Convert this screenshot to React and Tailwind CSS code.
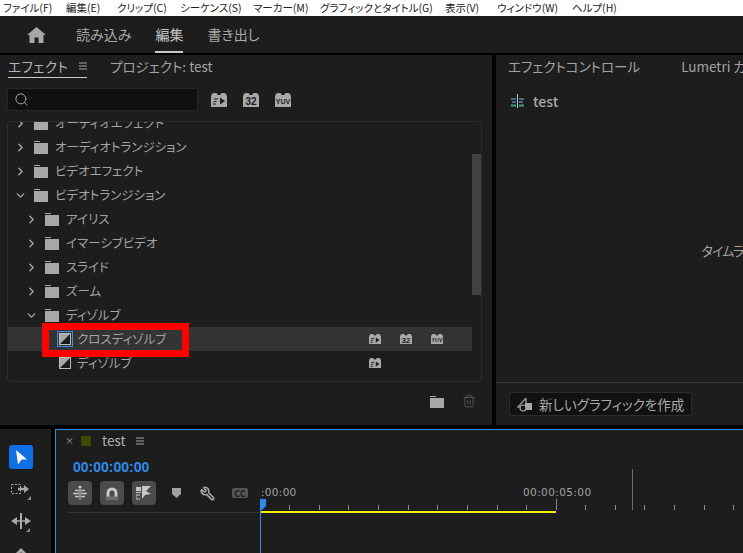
import React from "react";
import { ChevronRight, ChevronDown, Search, Trash2, Wrench } from "lucide-react";

const menus = [
  ["ファイル(F)", "w-[63px]"],
  ["編集(E)", "w-[51px]"],
  ["クリップ(C)", "w-[63px]"],
  ["シーケンス(S)", "w-[73px]"],
  ["マーカー(M)", "w-[67px]"],
  ["グラフィックとタイトル(G)", "w-[125px]"],
  ["表示(V)", "w-[52px]"],
  ["ウィンドウ(W)", "w-[75px]"],
  ["ヘルプ(H)", "w-[60px]"],
];

const rows = [
  { name: "オーディオエフェクト", kind: "closed", depth: 0 },
  { name: "オーディオトランジション", kind: "closed", depth: 0 },
  { name: "ビデオエフェクト", kind: "closed", depth: 0 },
  { name: "ビデオトランジション", kind: "open", depth: 0 },
  { name: "アイリス", kind: "closed", depth: 1 },
  { name: "イマーシブビデオ", kind: "closed", depth: 1 },
  { name: "スライド", kind: "closed", depth: 1 },
  { name: "ズーム", kind: "closed", depth: 1 },
  { name: "ディゾルブ", kind: "open", depth: 1 },
  { name: "クロスディゾルブ", kind: "leaf", selected: true, badges: ["fx", "32", "yuv"] },
  { name: "ディゾルブ", kind: "leaf", badges: ["fx"] },
];

const Folder = () => (
  <svg width="14" height="13" viewBox="0 0 14 13" className="shrink-0">
    <rect x="0" y="0" width="6" height="1" fill="#a8a8a8" />
    <rect x="0" y="2" width="14" height="11" fill="#a8a8a8" />
  </svg>
);

const Badge = ({ type, size = 16 }) => (
  <svg width={size} height={size * 0.875} viewBox="0 0 16 14" className="shrink-0">
    <path
      d="M0 3 L1 1 Q1.500 0 3 0 L5.500 0 L7 2 L9 2 L10.500 0 L13 0 Q14.500 0 15 1 L16 3 L16 14 L0 14 Z"
      fill="#a8a8a8"
    />
    {type === "fx" && (
      <>
        <path d="M3 6 H7 M2.500 8.500 H5.500 M2 11 H5" stroke="#1d1d1d" strokeWidth="1.200" />
        <path d="M9 4.500 L14 8 L9 11.500 Z" fill="#1d1d1d" />
      </>
    )}
    {type === "32" && (
      <text x="8" y="12" textAnchor="middle" fontSize="10" fontWeight="700" fill="#1d1d1d" fontFamily="Liberation Sans, sans-serif">
        32
      </text>
    )}
    {type === "yuv" && (
      <text x="8" y="10.500" textAnchor="middle" fontSize="7" fontWeight="700" fill="#1d1d1d" fontFamily="Liberation Sans, sans-serif">
        YUV
      </text>
    )}
  </svg>
);

const Transition = ({ selected }) => (
  <span className={"flex h-4 w-4 shrink-0 items-center justify-center " + (selected ? "border border-[#3b8fe8]" : "")}>
    <svg width="12" height="12" viewBox="0 0 12 12">
      <rect x="0.500" y="0.500" width="11" height="11" fill="#1d1d1d" stroke="#bdbdbd" />
      <path d="M1 11 L11 1 L1 1 Z" fill="#a8a8a8" />
    </svg>
  </span>
);

const TreeRow = ({ row }) => {
  if (row.kind === "leaf") {
    return (
      <div className={"flex h-6 shrink-0 items-center pl-[49px] " + (row.selected ? "bg-[#333333]" : "")}>
        <Transition selected={row.selected} />
        <span className="ml-[4px] w-[292px] text-[12.5px] text-[#a3a3a3]">{row.name}</span>
        <div className="flex gap-[19px]">
          {row.badges.map((b) => (
            <Badge key={b} type={b} size={12} />
          ))}
        </div>
      </div>
    );
  }
  return (
    <div className={"flex h-6 shrink-0 items-center " + (row.depth === 1 ? "pl-[17px]" : "pl-[6px]")}>
      {row.kind === "open" ? (
        <ChevronDown size={13} strokeWidth={2.5} className="shrink-0 text-[#a8a8a8]" />
      ) : (
        <ChevronRight size={13} strokeWidth={2.5} className="shrink-0 text-[#a8a8a8]" />
      )}
      <span className="ml-[7px] flex">
        <Folder />
      </span>
      <span className="ml-[7px] text-[12.5px] text-[#a3a3a3]">{row.name}</span>
    </div>
  );
};

const Hamburger = () => (
  <svg width="8" height="8" viewBox="0 0 8 8" className="shrink-0">
    <path d="M0 1 H8 M0 4 H8 M0 7 H8" stroke="#a8a8a8" strokeWidth="1" />
  </svg>
);

const ticks = [289, 319, 348, 378, 408, 437, 467, 497, 526, 585, 615, 644, 674, 704, 733];

const App = () => {
  return (
    <div className="relative flex h-[553px] w-[743px] flex-col overflow-hidden bg-black font-['Noto_Sans_CJK_JP','Noto_Sans',sans-serif] [font-feature-settings:'palt']">
      {/* windows menu */}
      <div className="flex h-[16px] shrink-0 items-center bg-white pl-[3px] text-[10.5px] leading-none text-[#222222]">
        {menus.map(([label, w]) => (
          <span key={label} className={"whitespace-nowrap " + w}>
            {label}
          </span>
        ))}
      </div>

      {/* workspace header */}
      <div className="flex h-[37px] shrink-0 items-stretch bg-[#1d1d1d] pl-[27px] text-[14px] text-[#a9a9a9]">
        <svg width="19" height="16" viewBox="0 0 19 16" className="mt-[11px]" fill="#a8a8a8">
          <path d="M9.500 0 L19 8 H16.500 V16 H11.500 V10.500 H7.500 V16 H2.500 V8 H0 Z" />
        </svg>
        <span className="ml-[30px] flex items-center">読み込み</span>
        <span className="ml-[24px] flex items-center border-b-2 border-[#c8c8c8] pt-[2px] text-[#c4c4c4]">編集</span>
        <span className="ml-[24px] flex items-center">書き出し</span>
      </div>

      {/* upper panels */}
      <div className="mt-[2px] flex h-[370px] shrink-0 gap-[4px]">
        <div className="flex w-[492px] shrink-0 flex-col bg-[#1d1d1d]">
          <div className="ml-[8px] flex h-[23px] items-end text-[13.5px] text-[#a3a3a3]">
            <div className="flex h-[23px] w-[79px] items-center justify-between border-b border-[#c8c8c8] text-[#b5b5b5]">
              <span className="tracking-[0.5px]">エフェクト</span>
              <Hamburger />
            </div>
            <span className="ml-[23px] flex h-[23px] items-center">プロジェクト: test</span>
          </div>

          <div className="mt-[10px] flex items-center">
            <div className="ml-[7px] flex h-[23px] w-[191px] items-center rounded-[3px] border border-[#262626] bg-[#101010] pl-[6px]">
              <Search size={15} strokeWidth={1.6} className="text-[#a8a8a8]" />
            </div>
            <div className="ml-[13px] flex gap-[16px]">
              <Badge type="fx" />
              <Badge type="32" />
              <Badge type="yuv" />
            </div>
          </div>

          <div className="ml-[7px] mt-[10px] flex h-[261px] w-[475px] overflow-hidden rounded-[4px] border border-[#2c2c2c]">
            <div className="-mt-[11px] flex w-[465px] flex-col">
              {rows.map((row) => (
                <TreeRow key={row.name + (row.kind === "leaf" ? "l" : row.depth)} row={row} />
              ))}
            </div>
            <div className="w-[9px] pt-[32px]">
              <div className="h-[141px] bg-[#424242]" />
            </div>
          </div>

          <div className="mt-[12px] flex justify-end gap-[18px] pr-[16px]">
            <svg width="14" height="12" viewBox="0 0 14 12" className="mt-[2px]">
              <rect x="0" y="0" width="6" height="1" fill="#a8a8a8" />
              <rect x="0" y="2" width="14" height="10" fill="#a8a8a8" />
            </svg>
            <Trash2 size={14} strokeWidth={1.2} className="text-[#6a6a6a]" />
          </div>
        </div>

        <div className="flex min-w-0 flex-1 flex-col bg-[#1d1d1d]">
          <div className="flex h-[23px] items-center whitespace-nowrap pl-[12px] text-[13.5px] text-[#a3a3a3]">
            <span>エフェクトコントロール</span>
            <span className="ml-[41px]">Lumetri カ</span>
          </div>
          <div className="mt-[16px] flex items-center pl-[14px]">
            <svg width="15" height="14" viewBox="0 0 15 14" className="shrink-0">
              <path d="M1 5 H6 M9 5 H14 M2 8 H6 M9 8 H13" stroke="#5b7fb0" strokeWidth="1.500" />
              <path d="M1 11.500 H6 M9 11.500 H14" stroke="#2fae7a" strokeWidth="1.800" />
              <path d="M7.500 0 V14" stroke="#c0c0c0" strokeWidth="1" />
            </svg>
            <span className="ml-[8px] text-[14px] font-medium leading-none text-[#a9a9a9]">test</span>
          </div>
          <div className="flex flex-1 items-center justify-end whitespace-nowrap pt-[12px] text-[13px] tracking-[-1px] text-[#a3a3a3]">
            <span>タイムラ</span>
          </div>
          <div className="flex h-[43px] items-start border-t border-[#333333] pl-[13px] pt-[9px]">
            <div className="flex h-[24px] w-[183px] items-center rounded-[3px] border border-[#2c2c2c] bg-[#111111] pl-[7px] text-[13.5px] text-[#a9a9a9]">
              <svg width="16" height="15" viewBox="0 0 16 15" className="shrink-0">
                <path d="M9 1 L1 10 H9 M9 1 V9" stroke="#8a8a8a" strokeWidth="1.500" fill="none" />
                <rect x="8" y="6" width="7" height="7" fill="#a8a8a8" />
                <circle cx="6" cy="11" r="3" fill="#111111" stroke="#a8a8a8" strokeWidth="1.200" />
              </svg>
              <span className="ml-[6px] whitespace-nowrap">新しいグラフィックを作成</span>
            </div>
          </div>
        </div>
      </div>

      {/* bottom: tools + timeline */}
      <div className="mt-[4px] flex flex-1 gap-[4px]">
        <div className="flex w-[51px] flex-col items-center bg-[#1d1d1d] pt-[16px]">
          <div className="-ml-[9px] flex h-6 w-6 shrink-0 items-center justify-center rounded-[3px] bg-[#0f6fe6]">
            <svg width="12" height="16" viewBox="0 0 12 16">
              <path d="M1 1 L12 10.500 H6.500 L3 15.500 Z M1 1 V15" fill="#ffffff" />
            </svg>
          </div>
          <svg width="20" height="18" viewBox="0 0 20 18" className="-ml-[9px] mt-[13px] shrink-0">
            <rect x="0.500" y="2.500" width="9" height="9" fill="none" stroke="#a8a8a8" strokeDasharray="2 1.500" />
            <path d="M7 7 H15" stroke="#a8a8a8" strokeWidth="2.500" />
            <path d="M13 3 L18 7 L13 11 Z" fill="#a8a8a8" />
            <path d="M20 14 V18 H16 Z" fill="#8a8a8a" />
          </svg>
          <svg width="22" height="20" viewBox="0 0 22 20" className="-ml-[9px] mt-[13px] shrink-0">
            <path d="M1 8 L7 4 V12 Z M21 8 L15 4 V12 Z" fill="#a8a8a8" />
            <path d="M7 8 H15" stroke="#a8a8a8" strokeWidth="1.500" />
            <path d="M11 0 V16" stroke="#a8a8a8" strokeWidth="2" />
            <path d="M20 15 V19 H16 Z" fill="#8a8a8a" />
          </svg>
          <svg width="14" height="12" viewBox="0 0 14 12" className="-ml-[9px] mt-[15px] shrink-0">
            <path d="M7 0 L14 7 L11 12 H3 L0 7 Z" fill="#a8a8a8" />
            <circle cx="7" cy="6" r="1.500" fill="#1d1d1d" />
          </svg>
        </div>

        <div className="relative flex flex-1 flex-col border-l border-t border-[#2d8ceb] bg-[#1d1d1d]">
          <div className="flex h-[21px] items-center pl-[9px] text-[13.5px] text-[#b0b0b0]">
            <span className="text-[9px] leading-none text-[#a8a8a8]">×</span>
            <span className="ml-[7px] h-[10px] w-[10px] bg-[#3f4a00]" />
            <span className="ml-[11px]">test</span>
            <span className="ml-[10px] flex">
              <Hamburger />
            </span>
          </div>
          <div className="mt-[7px] pl-[17px] font-['Liberation_Sans',sans-serif] text-[14px] font-bold leading-[18px] text-[#2d8ceb]">
            00:00:00:00
          </div>
          <div className="mt-[5px] flex items-center pl-[12px]">
            <div className="flex gap-[8px]">
              <span className="flex h-6 w-6 items-center justify-center rounded-[4px] bg-[#4b4b4b]">
                <svg width="16" height="16" viewBox="0 0 16 16">
                  <path d="M3 5.500 H7 M9 5.500 H13 M1 8.500 H7 M9 8.500 H15 M3 11.500 H7 M9 11.500 H13" stroke="#c8c8c8" strokeWidth="1.300" />
                  <path d="M8 1 V15" stroke="#c8c8c8" strokeWidth="1" />
                  <rect x="6.500" y="1" width="3" height="2" fill="#c8c8c8" />
                </svg>
              </span>
              <span className="flex h-6 w-6 items-center justify-center rounded-[4px] bg-[#4b4b4b]">
                <svg width="14" height="14" viewBox="0 0 14 14">
                  <path d="M3 14 V7 A4 4 0 0 1 11 7 V14" stroke="#c8c8c8" strokeWidth="3" fill="none" />
                  <path d="M1 10.500 H13 V14 H1 Z" fill="#6e6e6e" />
                </svg>
              </span>
              <span className="flex h-6 w-6 items-center justify-center rounded-[4px] bg-[#4b4b4b]">
                <svg width="16" height="14" viewBox="0 0 16 14">
                  <path d="M0 1 H5 V5 H0 Z M0 6 H5 V7 H0 Z" fill="#c8c8c8" />
                  <path d="M0 9 H4 M0 9 V13 H4" stroke="#c8c8c8" strokeWidth="1" fill="none" />
                  <path d="M6 0 V13 L9 9 L15 8 L10 5 L15 0 Z" fill="#c8c8c8" />
                </svg>
              </span>
            </div>
            <svg width="9" height="10" viewBox="0 0 9 10" className="ml-[16px]">
              <path d="M0 0 H9 V6 L4.500 10 L0 6 Z" fill="#a0a0a0" />
            </svg>
            <Wrench size={15} strokeWidth={2.5} className="ml-[19px] -scale-x-100 text-[#a8a8a8]" />
            <span className="ml-[17px] flex h-[10px] w-[16px] items-center justify-center rounded-[2px] bg-[#555555] text-[9px] font-bold leading-none text-[#1d1d1d]">
              CC
            </span>
          </div>
          <div className="ml-[12px] mt-[7px] h-px w-[192px] bg-[#333333]" />

          {/* ruler labels sit on the time axis */}
          <span className="absolute left-[205px] top-[57px] font-['DejaVu_Sans',sans-serif] text-[10.5px] leading-none tracking-[0.3px] text-[#a3a3a3]">
            :00:00
          </span>
          <span className="absolute left-[467px] top-[57px] font-['DejaVu_Sans',sans-serif] text-[10.5px] leading-none tracking-[0.4px] text-[#a3a3a3]">
            00:00:05:00
          </span>
          <svg className="absolute left-0 top-0" width="687" height="123" viewBox="56 430 687 123">
            {ticks.map((x) => (
              <path key={x} d={`M${x + 0.5} 505 V510`} stroke="#8a8a8a" />
            ))}
            <path d="M556.500 499 V510" stroke="#8a8a8a" />
            <path d="M632.500 469 V510" stroke="#6e6e6e" />
            <path d="M260 511 H556 V513 H260 Z" fill="#f5f000" />
            <path d="M260.500 510 V553" stroke="#2d8ceb" />
            <path d="M260 499 H266 V506 L262 510 H260 Z" fill="#2d8ceb" />
          </svg>
        </div>
      </div>

      {/* red annotation box */}
      <div className="absolute left-[42px] top-[323px] h-[34px] w-[147px] border-[7px] border-[#ff0000]" />
    </div>
  );
};

export default App;
